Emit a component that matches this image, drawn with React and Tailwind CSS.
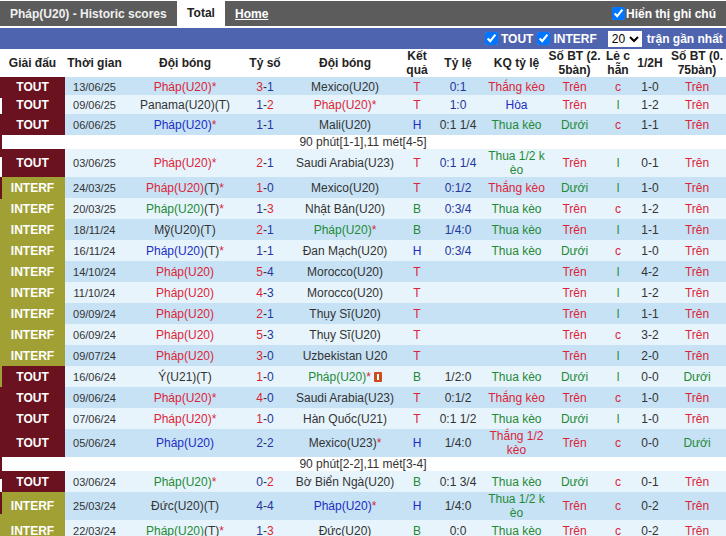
const rows = [
  ["TOUT", "13/06/25", "Pháp(U20)*", "red", "3-1", "Mexico(U20)", "", "T", "0:1", "n", "Thắng kèo", "Trên", "c", "1-0", "Trên", "h-[18px] [&>td]:pt-[2px]"],
  ["TOUT", "09/06/25", "Panama(U20)(T)", "", "1-2", "Pháp(U20)*", "red", "T", "1:0", "n", "Hòa", "Trên", "l", "1-2", "Trên", "h-[19px]"],
  ["TOUT", "06/06/25", "Pháp(U20)*", "blue", "1-1", "Mali(U20)", "", "H", "0:1 1/4", "", "Thua kèo", "Dưới", "c", "1-1", "Trên", "h-[21px]"],
  { note: "90 phút[1-1],11 mét[4-5]" },
  ["TOUT", "03/06/25", "Pháp(U20)*", "red", "2-1", "Saudi Arabia(U23)", "", "T", "0:1 1/4", "n", "Thua 1/2 kèo", "Trên", "l", "0-1", "Trên", "h-[28px]"],
  ["INTERF", "24/03/25", "Pháp(U20)(T)*", "red", "1-0", "Mexico(U20)", "", "T", "0:1/2", "n", "Thắng kèo", "Dưới", "l", "1-0", "Trên", "h-[21px]"],
  ["INTERF", "20/03/25", "Pháp(U20)(T)*", "green", "1-3", "Nhật Bản(U20)", "", "B", "0:3/4", "n", "Thua kèo", "Trên", "c", "1-2", "Trên", "h-[21px]"],
  ["INTERF", "18/11/24", "Mỹ(U20)(T)", "", "2-1", "Pháp(U20)*", "green", "B", "1/4:0", "n", "Thua kèo", "Trên", "l", "1-1", "Trên", "h-[21px]"],
  ["INTERF", "16/11/24", "Pháp(U20)(T)*", "blue", "1-1", "Đan Mạch(U20)", "", "H", "0:3/4", "n", "Thua kèo", "Dưới", "c", "1-0", "Trên", "h-[21px]"],
  ["INTERF", "14/10/24", "Pháp(U20)", "red", "5-4", "Morocco(U20)", "", "T", "", "", "", "Trên", "l", "4-2", "Trên", "h-[21px]"],
  ["INTERF", "11/10/24", "Pháp(U20)", "red", "4-3", "Morocco(U20)", "", "T", "", "", "", "Trên", "l", "1-2", "Trên", "h-[21px]"],
  ["INTERF", "09/09/24", "Pháp(U20)", "red", "2-1", "Thụy Sĩ(U20)", "", "T", "", "", "", "Trên", "l", "1-1", "Trên", "h-[21px]"],
  ["INTERF", "06/09/24", "Pháp(U20)", "red", "5-3", "Thụy Sĩ(U20)", "", "T", "", "", "", "Trên", "c", "3-2", "Trên", "h-[21px]"],
  ["INTERF", "09/07/24", "Pháp(U20)", "red", "3-0", "Uzbekistan U20", "", "T", "", "", "", "Trên", "l", "2-0", "Trên", "h-[21px]"],
  ["TOUT", "16/06/24", "Ý(U21)(T)", "", "1-0", "Pháp(U20)*", "green", "B", "1/2:0", "", "Thua kèo", "Dưới", "l", "0-0", "Dưới", "h-[21px]", true],
  ["TOUT", "09/06/24", "Pháp(U20)*", "red", "4-0", "Saudi Arabia(U23)", "", "T", "0:1/2", "", "Thắng kèo", "Trên", "c", "1-0", "Trên", "h-[21px]"],
  ["TOUT", "07/06/24", "Pháp(U20)*", "red", "1-0", "Hàn Quốc(U21)", "", "T", "0:1 1/2", "", "Thua kèo", "Dưới", "l", "1-0", "Trên", "h-[21px]"],
  ["TOUT", "05/06/24", "Pháp(U20)", "blue", "2-2", "Mexico(U23)*", "", "H", "1/4:0", "", "Thắng 1/2 kèo", "Trên", "c", "0-0", "Dưới", "h-[28px]"],
  { note: "90 phút[2-2],11 mét[3-4]" },
  ["TOUT", "03/06/24", "Pháp(U20)*", "green", "0-2", "Bờ Biển Ngà(U20)", "", "B", "0:1 3/4", "", "Thua kèo", "Dưới", "c", "0-1", "Trên", "h-[21px]"],
  ["INTERF", "25/03/24", "Đức(U20)(T)", "", "4-4", "Pháp(U20)*", "blue", "H", "1/4:0", "", "Thua 1/2 kèo", "Trên", "c", "0-2", "Trên", "h-[28px]"],
  ["INTERF", "22/03/24", "Pháp(U20)(T)*", "green", "1-3", "Đức(U20)", "", "B", "0:0", "", "Thua kèo", "Trên", "c", "0-2", "Trên", "h-[21px]"],
];

const tone = {
  red: "text-[#dc2438]",
  blue: "text-[#1c2cc4]",
  green: "text-[#1f8a35]",
  navy: "text-[#24359c]",
  "": "text-[#333]",
};

// the white and coloured bits down the left edge of the page
const strip = [
  ["h-[21px]", "bg-[#6b1220]"],
  ["h-[16px]", "bg-white"],
  ["h-[43px]", "bg-[#6b1220]"],
  ["h-[20px]", "bg-white"],
  ["h-[22px]", "bg-[#6b1220]"],
  ["h-[188px]", "bg-[#a1a034]"],
  ["h-[92px]", "bg-[#6b1220]"],
  ["h-[13px]", "bg-white"],
  ["h-[22px]", "bg-[#6b1220]"],
  ["h-[22px]", "bg-[#a1a034]"],
];

function Team({ name, color, flag }) {
  const m = name.match(/^(.*?\(U\d+\)| *.*?U20)?(\(T\))?(\*)?$/);
  return (
    <td className={`text-center ${tone[color]}`}>
      {m[1]}
      {m[2] && <span className="text-[#333]">{m[2]}</span>}
      {m[3] && <span className="text-[#dc2438]">*</span>}
      {flag && (
        <svg width="8" height="10" viewBox="0 0 8 10" className="inline-block ml-[3px] align-[-1px]">
          <rect width="8" height="10" rx="1" fill="#cc4a1c" />
          <rect x="3" y="2" width="2" height="6" fill="#fff" />
        </svg>
      )}
    </td>
  );
}

function Score({ value }) {
  const [a, b] = value.split("-");
  const win = Number(a) > Number(b);
  const lose = Number(a) < Number(b);
  return (
    <td className="text-center text-[#333]">
      <span className={win ? tone.red : tone.navy}>{a}</span>-
      <span className={lose ? tone.red : tone.navy}>{b}</span>
    </td>
  );
}

function Row({ r, odd }) {
  const color = (v) => (v === "Trên" || v.startsWith("Thắng") ? tone.red : v === "Hòa" ? tone.blue : tone.green);
  const res = { T: tone.red, H: tone.blue, B: tone.green };
  return (
    <tr className={`${r[15]} ${odd ? "bg-[#c7e2f5]" : "bg-[#e7f4fc]"}`}>
      <td className={`text-center font-bold text-white ${r[0] === "TOUT" ? "bg-[#6b1220]" : "bg-[#a1a034]"}`}>{r[0]}</td>
      <td className="text-center text-[11px] text-[#333]">{r[1]}</td>
      <Team name={r[2]} color={r[3]} />
      <Score value={r[4]} />
      <Team name={r[5]} color={r[6]} flag={r[16]} />
      <td className={`text-center ${res[r[7]]}`}>{r[7]}</td>
      <td className={`text-center ${r[9] ? tone.navy : "text-[#333]"}`}>{r[8]}</td>
      <td className={`text-center break-all ${r[10] ? color(r[10]) : ""}`}>{r[10]}</td>
      <td className={`text-center ${color(r[11])}`}>{r[11]}</td>
      <td className={`text-center ${r[12] === "c" ? tone.red : tone.green}`}>{r[12]}</td>
      <td className="text-center text-[#333]">{r[13]}</td>
      <td className={`text-center ${color(r[14])}`}>{r[14]}</td>
    </tr>
  );
}

export default function App() {
  let n = 0;
  return (
    <div className="relative w-[726px] h-[536px] overflow-hidden bg-white font-['Liberation_Sans',Arial,sans-serif] text-[12px] leading-[14px]">
      <div className="mt-px h-[25px] bg-[#5c5c5c] flex items-stretch font-bold">
        <div className="pl-[10px] w-[177px] self-center text-[#f0f0f0]">Pháp(U20) - Historic scores</div>
        <div className="w-[48px] bg-white text-[#222] text-center leading-[25px]">Total</div>
        <div className="ml-[10px] self-center text-white underline">Home</div>
        <label className="ml-auto pr-[10px] flex items-center text-white">
          <input type="checkbox" defaultChecked className="w-[13px] h-[13px] m-0" />
          <span className="ml-px">Hiển thị ghi chú</span>
        </label>
      </div>
      <div className="mt-[2px] h-[21px] bg-[#4f64ae] flex items-center font-bold text-white pl-[485px]">
        <input type="checkbox" defaultChecked className="w-[13px] h-[13px] m-0" />
        <span className="ml-[3px]">TOUT</span>
        <input type="checkbox" defaultChecked className="w-[13px] h-[13px] m-0 ml-[4px]" />
        <span className="ml-[3px]">INTERF</span>
        <select defaultValue="20" className="ml-[11px] w-[34px] h-[16px] bg-white text-black font-normal">
          <option>20</option>
        </select>
        <span className="ml-[5px]">trận gần nhất</span>
      </div>
      <table className="w-[726px] table-fixed border-collapse">
        <colgroup>
          <col className="w-[65px]" />
          <col className="w-[59px]" />
          <col className="w-[122px]" />
          <col className="w-[38px]" />
          <col className="w-[122px]" />
          <col className="w-[22px]" />
          <col className="w-[60px]" />
          <col className="w-[57px]" />
          <col className="w-[59px]" />
          <col className="w-[28px]" />
          <col className="w-[36px]" />
          <col className="w-[58px]" />
        </colgroup>
        <thead>
          <tr className="h-[28px] text-[#222] font-bold">
            {["Giải đấu", "Thời gian", "Đội bóng", "Tỷ số", "Đội bóng", "Kết quả", "Tỷ lệ", "KQ tỷ lệ", "Số BT (2. 5bàn)", "Lẻ c hẵn", "1/2H", "Số BT (0. 75bàn)"].map((h, i) => (
              <th key={i} className="p-0 text-center font-bold break-all">{h}</th>
            ))}
          </tr>
        </thead>
        <tbody>
          {rows.map((r, i) => {
            if (r.note) {
              return (
                <tr key={i} className="h-[14px] bg-white">
                  <td colSpan={12} className="text-center text-[#333]">{r.note}</td>
                </tr>
              );
            }
            n += 1;
            return <Row key={i} r={r} odd={n % 2 === 1} />;
          })}
        </tbody>
      </table>
      <div className="absolute left-0 top-[77px] w-[2px] flex flex-col">
        {strip.map(([h, c], i) => (
          <div key={i} className={`${h} ${c}`} />
        ))}
      </div>
    </div>
  );
}
